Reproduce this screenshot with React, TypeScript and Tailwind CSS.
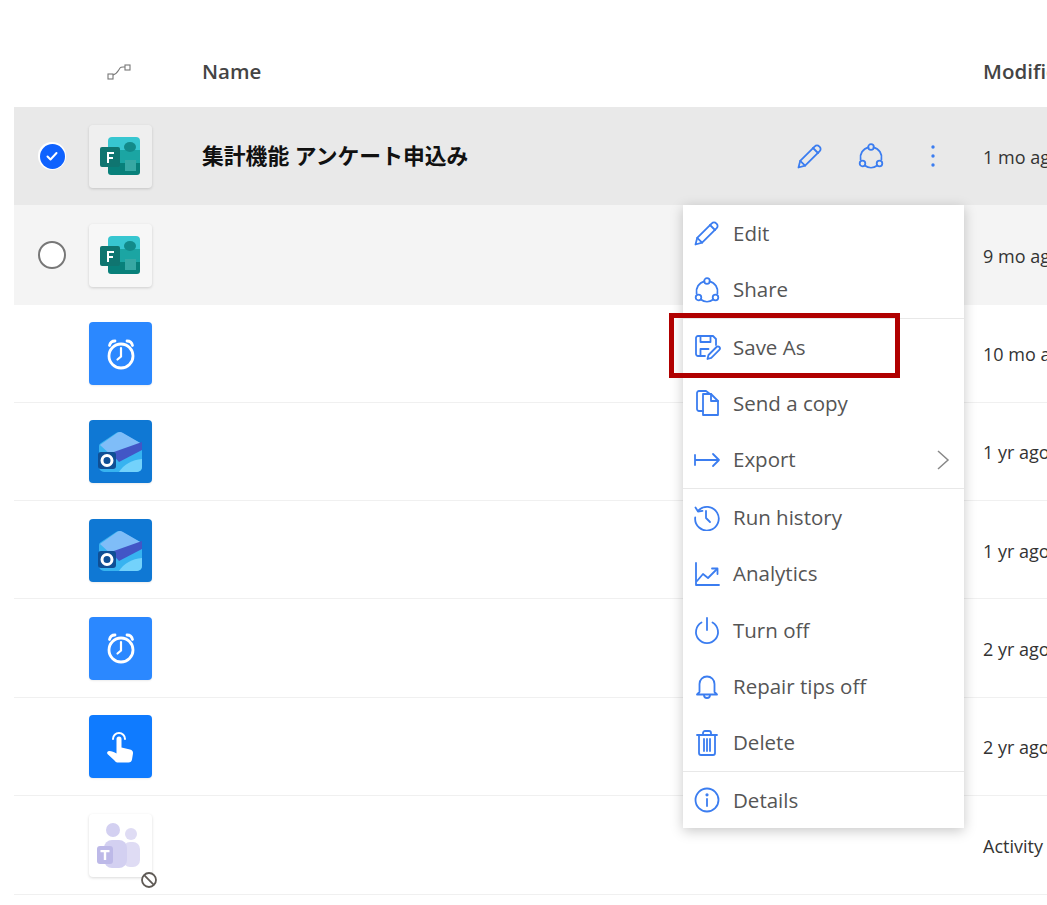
import React from "react";

const FONT = "font-['Open_Sans','Noto_Sans_CJK_JP',sans-serif]";

function IconSvg({ children, size = 28 }: { children: React.ReactNode; size?: number }) {
  return (
    <svg
      width={size}
      height={size}
      viewBox="0 0 28 28"
      fill="none"
      stroke="#3b7df0"
      strokeWidth="1.800"
      strokeLinecap="round"
      strokeLinejoin="round"
    >
      {children}
    </svg>
  );
}

const PencilIcon = () => (
  <IconSvg>
    <path d="M2.500 25.500l1.700-6.600L18.800 4.300a3 3 0 0 1 4.400 0l.5.5a3 3 0 0 1 0 4.300L9.100 23.700z" />
    <path d="M4.200 18.900l4.900 4.800M17 6l5 5" />
  </IconSvg>
);

const ShareIcon = () => (
  <IconSvg>
    <circle cx="14" cy="5" r="2.800" />
    <circle cx="5.500" cy="21.500" r="2.800" />
    <circle cx="22.500" cy="21.500" r="2.800" />
    <path d="M11.400 5.300A10.500 10.500 0 0 0 3.600 17.500M16.600 5.300A10.500 10.500 0 0 1 24.400 17.500M7.800 23.600a10.500 10.500 0 0 0 12.400 0" />
  </IconSvg>
);

const SaveAsIcon = () => (
  <IconSvg>
    <path d="M12 23H5a2 2 0 0 1-2-2V5a2 2 0 0 1 2-2h15l3 3v6" />
    <path d="M7.500 3v6h10V3M7.500 23v-7h8" />
    <path d="M14.500 26l1-4 8-8a1.900 1.900 0 0 1 2.800 2.800l-8 8z" />
  </IconSvg>
);

const CopyIcon = () => (
  <IconSvg>
    <path d="M10 26h15V12l-7-7h-8z" />
    <path d="M18 5v7h7" />
    <path d="M10 22H6a2 2 0 0 1-2-2V4a2 2 0 0 1 2-2h7l4 3" />
  </IconSvg>
);

const ExportIcon = () => (
  <IconSvg>
    <path d="M2 9v10M2.500 14H26M20 8l6 6-6 6" />
  </IconSvg>
);

const HistoryIcon = () => (
  <IconSvg>
    <path d="M5 8a11.800 11.800 0 1 1-2.800 6.500" />
    <path d="M2.500 4.500L5 8.500l4.500-.7" />
    <path d="M13 8v7l4 4" />
  </IconSvg>
);

const AnalyticsIcon = () => (
  <IconSvg>
    <path d="M3 3v22h23" />
    <path d="M4 21l6-7 5 4 9-9" />
    <path d="M19 8.500h5.500V14" />
  </IconSvg>
);

const PowerIcon = () => (
  <IconSvg>
    <path d="M14 2v12" />
    <path d="M8.500 6.500a11 11 0 1 0 11 0" />
  </IconSvg>
);

const BellIcon = () => (
  <IconSvg>
    <path d="M6.500 20V12a7.500 7.500 0 0 1 15 0v8l2.500 2.500H4z" />
    <path d="M11 23a3 3 0 0 0 6 0" />
  </IconSvg>
);

const TrashIcon = () => (
  <IconSvg>
    <path d="M4 6h20M10 6V4a2 2 0 0 1 2-2h4a2 2 0 0 1 2 2v2" />
    <path d="M6 6v18a2 2 0 0 0 2 2h12a2 2 0 0 0 2-2V6" />
    <path d="M11 10v12M14 10v12M17 10v12" />
  </IconSvg>
);

const InfoIcon = () => (
  <IconSvg>
    <circle cx="14" cy="14" r="11.500" />
    <path d="M14 13v7" />
    <circle cx="14" cy="8.800" r="0.700" fill="#3b7df0" />
  </IconSvg>
);

function FormsIcon() {
  return (
    <div className="w-[63px] h-[63px] rounded bg-white/30 shadow-[0_1px_3px_rgba(0,0,0,0.16)]">
      <svg width="63" height="63" viewBox="0 0 63 63">
        <rect x="19" y="12" width="32" height="20" rx="4" fill="#37c6d0" />
        <rect x="19" y="30" width="32" height="20" rx="3" fill="#08807a" />
        <rect x="19" y="25" width="32" height="13" fill="#1ba5a3" />
        <ellipse cx="41" cy="22" rx="6" ry="5" fill="#128a8a" />
        <rect x="36" y="35" width="11" height="11" fill="#37a8a4" />
        <rect x="11" y="22" width="20" height="20" rx="2" fill="#0f7570" />
        <path d="M18 27h7v2h-5v3h4v2h-4v4h-2z" fill="#ffffff" />
      </svg>
    </div>
  );
}

function ClockTile() {
  return (
    <div className="w-[63px] h-[63px] rounded bg-[#2b88ff] flex items-center justify-center shadow-[0_1px_2px_rgba(0,0,0,0.08)]">
      <svg width="34" height="34" viewBox="0 0 34 34" fill="none" stroke="#fff" strokeWidth="2.800" strokeLinecap="round">
        <circle cx="17" cy="19" r="12" />
        <path d="M17 11v8.500l-3.500 3" strokeWidth="2.200" />
        <path d="M5.500 8.500c.5-2.500 2.500-4.500 5.500-4.500M28.500 8.500c-.5-2.500-2.500-4.500-5.500-4.500" />
      </svg>
    </div>
  );
}

function OutlookTile() {
  return (
    <div className="w-[63px] h-[63px] rounded bg-[#0f78d4] shadow-[0_1px_2px_rgba(0,0,0,0.08)]">
      <svg width="63" height="63" viewBox="0 0 63 63">
        <path d="M10 26q0-2 2-3L27 13q3-2 6 0l18 10q2 1 2 3v21a5 5 0 0 1-5 5H15a5 5 0 0 1-5-5z" fill="#37b3f0" />
        <path d="M11 25L28 13q3-2 6 0l19 11-30 12z" fill="#7fbdf8" />
        <path d="M22 33L53 22v8L30 42z" fill="#4256c6" />
        <path d="M30 52c5-8 13-12 23-13v8a5 5 0 0 1-5 5z" fill="#73d2fb" />
        <rect x="9" y="32" width="18" height="17" rx="3" fill="#0f4f95" />
        <circle cx="18" cy="40.500" r="5" fill="#0f4f95" stroke="#fff" strokeWidth="3" />
      </svg>
    </div>
  );
}

function TouchTile() {
  return (
    <div className="w-[63px] h-[63px] rounded bg-[#0f7bff] flex items-center justify-center shadow-[0_1px_2px_rgba(0,0,0,0.08)]">
      <svg width="36" height="40" viewBox="0 0 36 40" fill="none">
        <path d="M10 12a6 6 0 1 1 12 0" stroke="#fff" strokeWidth="2" strokeLinecap="round" />
        <path
          d="M13.500 12a2.500 2.500 0 0 1 5 0v8.500l8.500 2c2.200.6 3.300 2 3 4l-1 6c-.3 1.700-1.500 3-3.500 3H15c-1.500 0-2.500-.6-3.500-2L4.500 27c-1-1.300 0-3 1.800-3 2.200 0 5 1.200 7.200 2.500z"
          fill="#fff"
        />
      </svg>
    </div>
  );
}

function TeamsTile() {
  return (
    <div className="relative w-[63px] h-[63px] rounded bg-white shadow-[0_1px_3px_rgba(0,0,0,0.15)]">
      <svg width="63" height="63" viewBox="0 0 63 63">
        <circle cx="24" cy="16" r="7" fill="#d3d0f1" />
        <circle cx="42" cy="20" r="6" fill="#dfdcf4" />
        <rect x="34" y="28" width="17" height="25" rx="7" fill="#dfdcf4" />
        <rect x="15" y="26" width="23" height="28" rx="8" fill="#d3d0f1" />
        <rect x="8" y="32" width="16" height="18" rx="3" fill="#bdb9e8" />
        <path d="M11.500 36h9v2.200h-3.300V46h-2.400v-7.800h-3.300z" fill="#fff" />
      </svg>
      <svg className="absolute left-[51px] top-[57px]" width="18" height="18" viewBox="0 0 18 18" fill="#fff" stroke="#5f5a55" strokeWidth="1.800">
        <circle cx="9" cy="9" r="7" />
        <path d="M4.200 4.200l9.600 9.600" />
      </svg>
    </div>
  );
}

type Row = {
  height: string;
  bg: string;
  icon: React.ReactNode;
  date: string;
  radio?: "on" | "off";
  name?: string;
};

const rows: Row[] = [
  { height: "h-[98px]", bg: "bg-[#e9e9e9]", icon: <FormsIcon />, date: "1 mo ago", radio: "on", name: "集計機能 アンケート申込み" },
  { height: "h-[100px]", bg: "bg-[#f4f4f4]", icon: <FormsIcon />, date: "9 mo ago", radio: "off" },
  { height: "h-[98px]", bg: "border-b border-[#f0f0f0]", icon: <ClockTile />, date: "10 mo ago" },
  { height: "h-[98px]", bg: "border-b border-[#f0f0f0]", icon: <OutlookTile />, date: "1 yr ago" },
  { height: "h-[98px] pt-px", bg: "border-b border-[#f0f0f0]", icon: <OutlookTile />, date: "1 yr ago" },
  { height: "h-[99px]", bg: "border-b border-[#f0f0f0]", icon: <ClockTile />, date: "2 yr ago" },
  { height: "h-[98px]", bg: "border-b border-[#f0f0f0]", icon: <TouchTile />, date: "2 yr ago" },
  { height: "h-[99px] pt-px", bg: "border-b border-[#f0f0f0]", icon: <TeamsTile />, date: "Activity" },
];

const menuGroups: { label: string; icon: React.ReactNode; sub?: boolean }[][] = [
  [
    { label: "Edit", icon: <PencilIcon /> },
    { label: "Share", icon: <ShareIcon /> },
  ],
  [
    { label: "Save As", icon: <SaveAsIcon /> },
    { label: "Send a copy", icon: <CopyIcon /> },
    { label: "Export", icon: <ExportIcon />, sub: true },
  ],
  [
    { label: "Run history", icon: <HistoryIcon /> },
    { label: "Analytics", icon: <AnalyticsIcon /> },
    { label: "Turn off", icon: <PowerIcon /> },
    { label: "Repair tips off", icon: <BellIcon /> },
    { label: "Delete", icon: <TrashIcon /> },
  ],
  [{ label: "Details", icon: <InfoIcon /> }],
];

function Radio({ state }: { state?: "on" | "off" }) {
  if (state === "on") {
    return (
      <div className="w-7 h-7 rounded-full bg-white flex items-center justify-center">
        <div className="w-[25px] h-[25px] rounded-full bg-[#0f62fe] flex items-center justify-center">
          <svg width="14" height="14" viewBox="0 0 14 14" fill="none" stroke="#fff" strokeWidth="2" strokeLinecap="round" strokeLinejoin="round">
            <path d="M2.500 7.500l3 3 6-6.500" />
          </svg>
        </div>
      </div>
    );
  }
  if (state === "off") {
    return <div className="w-7 h-7 rounded-full bg-white border-2 border-[#777]" />;
  }
  return <div className="w-7 h-7" />;
}

function ContextMenu() {
  return (
    <div className="absolute left-[683px] top-[205px] w-[281px] bg-white shadow-[0_3px_12px_rgba(0,0,0,0.22)]">
      {menuGroups.map((group, i) => (
        <div key={i} className={i > 0 ? "border-t border-[#e8e8e8]" : ""}>
          {group.map((item) => (
            <div key={item.label} className="h-[56.400px] flex items-center pl-[10px] pr-[14px] text-[#555] text-[20.500px]">
              <span className="w-[28px] flex justify-center">{item.icon}</span>
              <span className="ml-[12px] flex-1">{item.label}</span>
              {item.sub && (
                <svg width="14" height="22" viewBox="0 0 14 22" fill="none" stroke="#888" strokeWidth="1.500">
                  <path d="M2 2l10 9-10 9" />
                </svg>
              )}
            </div>
          ))}
        </div>
      ))}
    </div>
  );
}

export default function App() {
  return (
    <div className={`${FONT} relative w-[1047px] h-[905px] overflow-hidden bg-white`}>
      <div className="h-[107px] pt-[36px] pl-[14px] flex items-center text-[20.500px] font-semibold text-[#444]">
        <div className="w-[75px] flex-none" />
        <div className="w-[63px] flex-none flex justify-center pr-[3px]">
          <svg width="24" height="16" viewBox="0 0 24 16" fill="none" stroke="#777" strokeWidth="1.100">
            <rect x="1" y="10" width="5" height="5" />
            <rect x="18" y="1" width="5" height="5" />
            <path d="M6 11c4-1 5-4 7-7 1-1.500 3-1 5-1" />
          </svg>
        </div>
        <div className="w-[781px] ml-[50px] flex-none">Name</div>
        <div className="flex-none whitespace-nowrap">Modified</div>
      </div>

      {rows.map((row, i) => (
        <div key={i} className={`${row.height} ${row.bg} ml-[14px] flex items-center`}>
          <div className="w-[75px] flex-none flex justify-center pl-px">
            <Radio state={row.radio} />
          </div>
          <div className="w-[63px] flex-none">{row.icon}</div>
          <div className="w-[781px] ml-[50px] flex-none flex items-center">
            <div className="flex-1 font-bold text-[21.800px] text-[#111]">{row.name}</div>
            {row.radio === "on" && (
              <div className="flex items-center mr-[36px] gap-[34px]">
                <span className="-mr-[1px]">
                  <PencilIcon />
                </span>
                <ShareIcon />
                <svg width="28" height="28" viewBox="0 0 28 28" fill="#3b7df0">
                  <circle cx="14" cy="5" r="1.700" />
                  <circle cx="14" cy="14" r="1.700" />
                  <circle cx="14" cy="23" r="1.700" />
                </svg>
              </div>
            )}
          </div>
          <div className="flex-none whitespace-nowrap text-[18px] text-[#333] pt-[2px]">{row.date}</div>
        </div>
      ))}

      <ContextMenu />
      <div className="absolute left-[669px] top-[313px] w-[231px] h-[65px] border-[5px] border-[#b00000]" />
    </div>
  );
}
